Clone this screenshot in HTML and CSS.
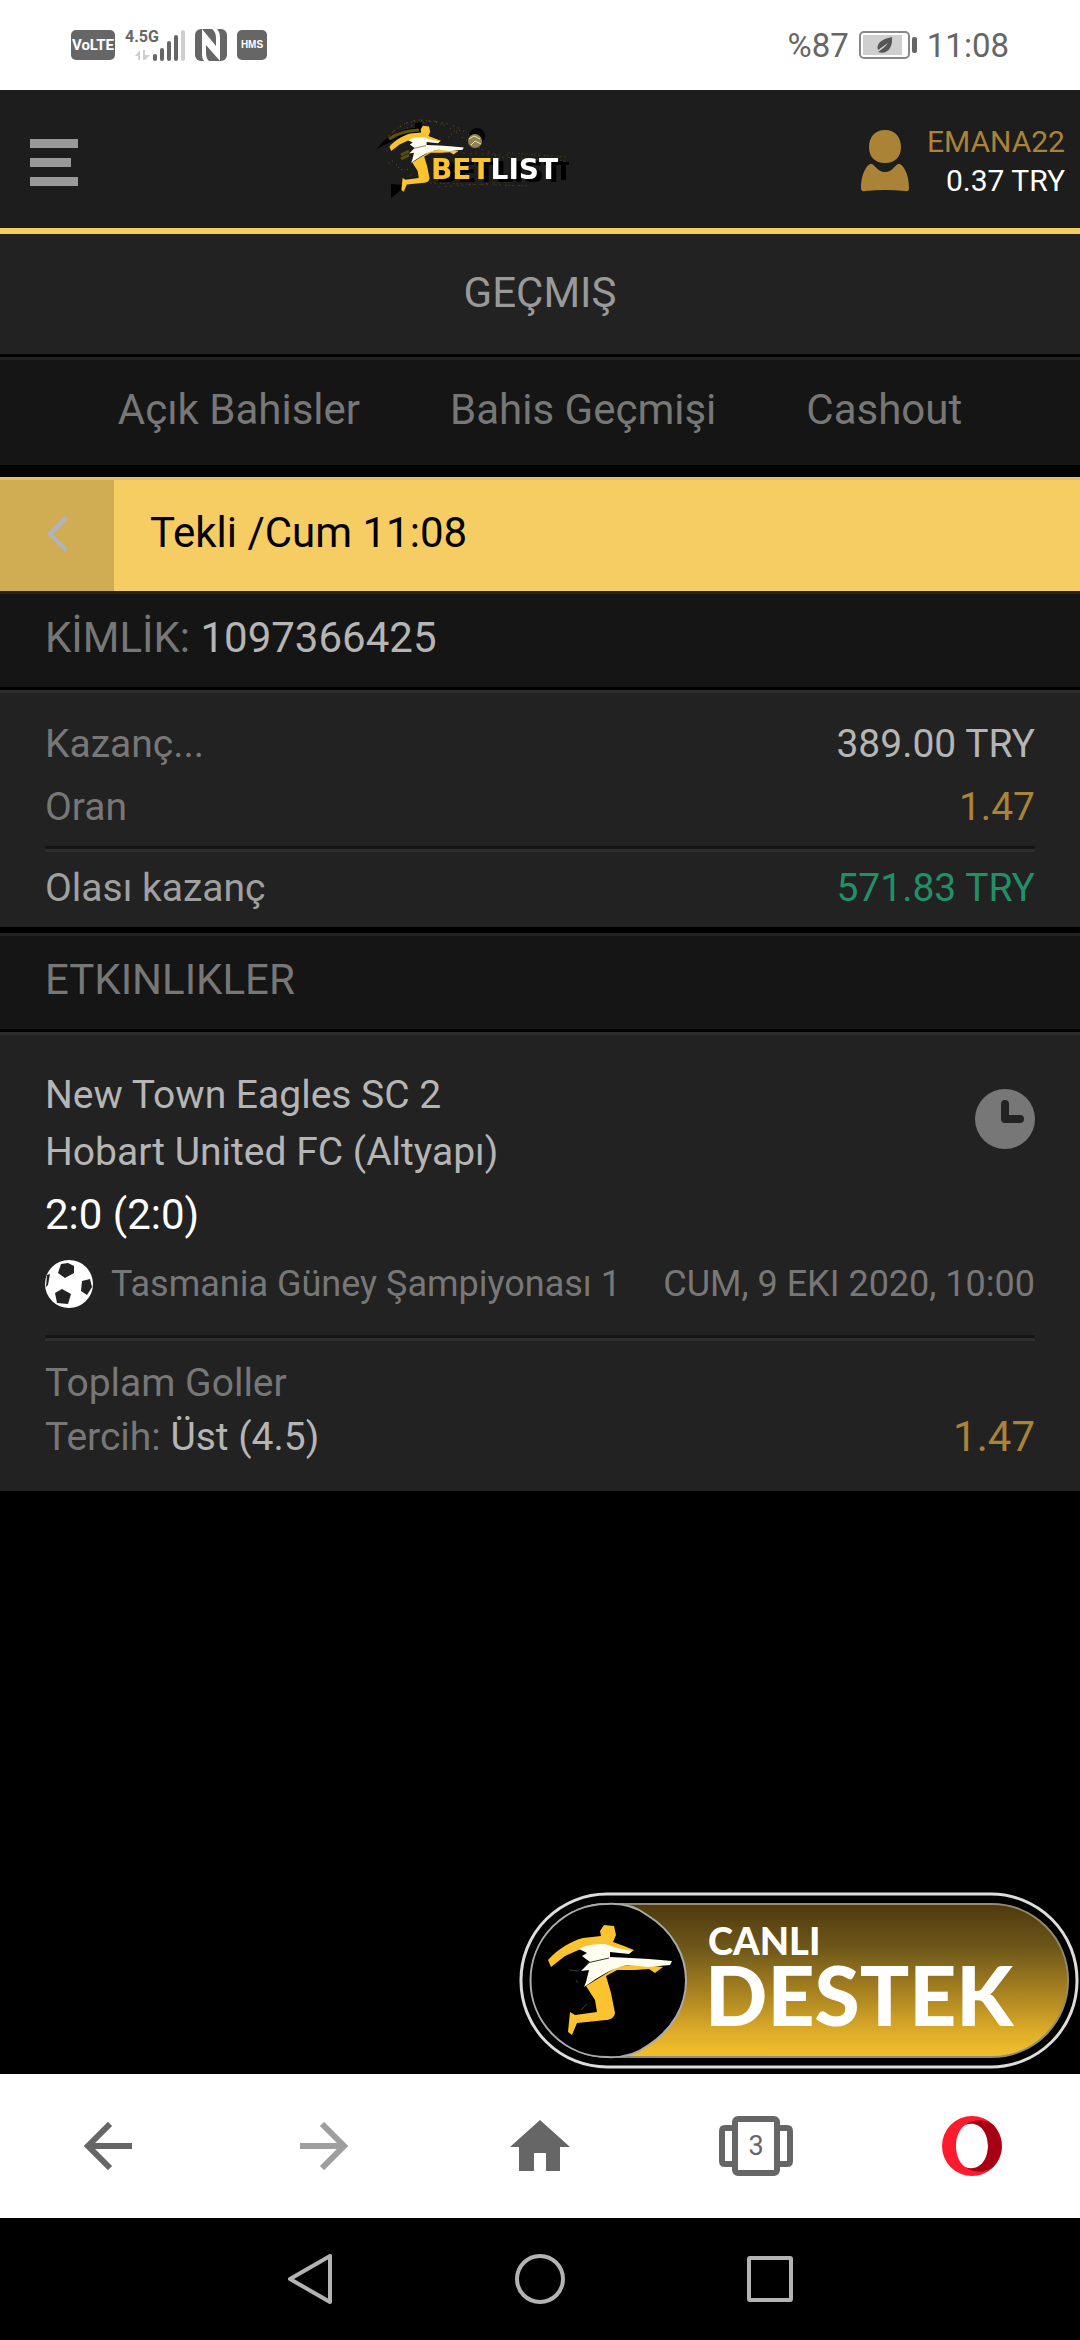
FILE: index.html
```html
<!DOCTYPE html>
<html lang="tr">
  <head>
    <meta charset="UTF-8" />
    <meta name="viewport" content="width=device-width, initial-scale=1.0" />
    <title>Betlist - Geçmiş</title>
    <link rel="stylesheet" href="styles.css">
  </head>
  <body>
    <!-- kicker figure, shared by the logo and the support button -->
    <svg class="defs" aria-hidden="true">
      <symbol id="kicker" viewBox="0 0 160 160" overflow="visible">
        <path fill="#fbc32f" d="M29 68C39 57 52 49 64 46L82 44 81 39 85 33 95 34 97 43 94 50 105 54 115 58 111 61 89 56 64 56 46 64 32 75Z"/>
        <path fill="#fbc32f" d="M98 75L118 72 144 75 136 81 130 77 116 78 98 78 87 84 92 101 96 121C95 126 91 128 87 128L58 131 53 143 49 140 51 120 56 123 78 120 76 108 67 94Z"/>
        <path fill="#fffdf0" d="M60 57C67 53 75 52 86 52L98 56 113 59 110 62 91 60 91 65 112 66 130 67 153 69 151 73 129 75 111 73C96 74 81 84 65 95L67 90 70 78 62 79 71 70 63 64 68 61Z"/>
        <path fill="none" stroke="#3a3a35" stroke-width="1" d="M68 71L90 66M50 78l10 1M57 88l2 3M62 118l6-6"/>
      </symbol>
    </svg>

    <div class="status">
      <div class="status-left">
        <span class="volte">VoLTE</span>
        <div class="signal">
          <span class="net">4.5G</span>
          <svg width="60" height="32" viewBox="0 0 60 32">
            <g fill="#cfcfcf">
              <path d="M10 27L15 21V31H13V27ZM18 21H20V26H25L20 31H18Z"/>
              <rect x="56" y="1" width="4" height="31" rx="2"/>
            </g>
            <g fill="#666">
              <rect x="28" y="25" width="4" height="7" rx="2"/>
              <rect x="35" y="19" width="4" height="13" rx="2"/>
              <rect x="42" y="12" width="4" height="20" rx="2"/>
              <rect x="49" y="6" width="4" height="26" rx="2"/>
            </g>
          </svg>
        </div>
        <svg width="32" height="32" viewBox="0 0 32 32">
          <rect width="32" height="32" rx="6" fill="#666"/>
          <path fill="#fff" d="M7 0L21 17V9Q21 3 17 0H22Q25 3 25 9V32L11 16V24Q11 29 14 32H9Q7 30 7 25Z"/>
        </svg>
        <span class="hms">HMS</span>
      </div>
      <div class="status-right">
        <span>%87</span>
        <svg width="58" height="28" viewBox="0 0 58 28">
          <rect x="1" y="1" width="49" height="26" rx="4" fill="#fff" stroke="#888" stroke-width="2"/>
          <rect x="4" y="4" width="39" height="20" fill="#cfcfcf"/>
          <rect x="53" y="6" width="5" height="16" rx="2" fill="#666"/>
          <path fill="#555" d="M33 6C22 8 17 13 19 19C23 16 26 14 29 12C26 16 23 18 19 21C28 24 34 17 33 6Z"/>
        </svg>
        <span>11:08</span>
      </div>
    </div>

    <header class="header">
      <button class="menu" type="button" aria-label="Menü">
        <svg width="48" height="48" viewBox="0 0 48 48" fill="#999">
          <path d="M0 0H48V9H0ZM0 19H41V28H0ZM0 38H48V47H0Z"/>
        </svg>
      </button>
      <a class="logo" href="#" aria-label="Betlist">
        <svg width="200" height="110" viewBox="10 0 200 110">
          <g fill="none" stroke="#a98420" stroke-linecap="round" opacity=".6">
            <path stroke-dasharray="0 5 0 3 0 7" d="M26 42C36 20 70 10 98 32S130 48 140 58M30 35C45 18 60 16 84 22"/>
            <path stroke-dasharray="0 4 0 6 0 3" d="M30 62C38 54 36 74 50 68M90 36C98 26 106 26 118 44M150 52L208 56M140 56L205 60M72 82L172 85"/>
            <path stroke-dasharray="0 7 0 5" d="M28 50C50 8 90 20 104 30M105 52L150 54M80 86L165 80"/>
          </g>
          <path fill="#000" d="M18 48C28 33 44 28 56 27L56 22 63 21 62 32C46 34 32 40 18 48ZM32 83L43 84 42 89 32 97Z"/>
          <path fill="none" stroke="#5c5208" stroke-width="3" d="M30 38C40 31 50 30 60 29M42 58l8-4M50 50l-8 4"/>
          <circle cx="118" cy="35" r="8" fill="#050505"/>
          <circle cx="116" cy="40" r="7" fill="#8f8251"/>
          <path fill="none" stroke="#eee5bd" d="M110 38l5-3 6 3M112 44l4-4 6 3"/>
          <use href="#kicker" x="13" y="5" width="96" height="96"/>
          <path fill="#000" d="M199 61H210V64H207V79H202V64H199Z"/>
          <text class="logo-text" x="72" y="78"><tspan fill="#fbc32f">BET</tspan><tspan fill="#fff">LIST</tspan></text>
        </svg>
      </a>
      <a class="user" href="#">
        <svg width="48" height="62" viewBox="0 0 48 62" fill="#ab8336">
          <path d="M24 0C34 0 40 7 40 17S34 33 24 33 8 27 8 17 14 0 24 0ZM10 34C14 34 16 42 24 42S34 34 38 34C42 34 48 44 48 58Q48 62 44 61Q24 59 4 61Q0 62 0 58C0 44 6 34 10 34Z"/>
        </svg>
        <span class="account">
          <span class="name">EMANA22</span>
          <span>0.37 TRY</span>
        </span>
      </a>
    </header>

    <main>
      <h1 class="title">GEÇMIŞ</h1>
      <nav class="tabs">
        <a href="#">Açık Bahisler</a>
        <a href="#">Bahis Geçmişi</a>
        <a href="#">Cashout</a>
      </nav>

      <div class="bet-bar">
        <button class="back" type="button" aria-label="Geri">
          <svg width="22" height="36" viewBox="0 0 22 36" fill="none" stroke="#b3b3b3" stroke-width="5" stroke-linecap="round" stroke-linejoin="round">
            <path d="M19 3L4 18L19 33"/>
          </svg>
        </button>
        <h2>Tekli /Cum 11:08</h2>
      </div>

      <div class="strip">KİMLİK: <span class="value">1097366425</span></div>

      <dl class="panel summary">
        <div class="row"><dt>Kazanç...</dt><dd>389.00 TRY</dd></div>
        <div class="row"><dt>Oran</dt><dd class="odds">1.47</dd></div>
        <div class="row total"><dt>Olası kazanç</dt><dd class="win">571.83 TRY</dd></div>
      </dl>

      <h2 class="strip events">ETKINLIKLER</h2>

      <section class="panel event">
        <div class="match">
          <div class="teams">
            <p>New Town Eagles SC 2</p>
            <p>Hobart United FC (Altyapı)</p>
            <p class="score">2:0 (2:0)</p>
          </div>
          <svg class="clock" width="60" height="60" viewBox="0 0 60 60">
            <circle cx="30" cy="30" r="30" fill="#777"/>
            <path fill="none" stroke="#222" stroke-width="8" stroke-linecap="round" stroke-linejoin="round" d="M30 15V30H45"/>
          </svg>
        </div>
        <div class="league">
          <svg width="48" height="48" viewBox="0 0 48 48">
            <circle cx="24" cy="24" r="24" fill="#fff"/>
            <path fill="#222" d="M16 4L23 3 29 6 29 13 20 18 13 13ZM37 21L45 19 47 27 42 35 36 31ZM10 33L17 29 26 34 23 44 12 43ZM2 15L5 14 3 25 1 27Z"/>
          </svg>
          <span class="league-name">Tasmania Güney Şampiyonası 1</span>
          <time datetime="2020-10-09T10:00">CUM, 9 EKI 2020, 10:00</time>
        </div>
        <div class="pick">
          <div>
            <p>Toplam Goller</p>
            <p>Tercih: <span class="value">Üst (4.5)</span></p>
          </div>
          <span class="odds big">1.47</span>
        </div>
      </section>
    </main>

    <button class="support" type="button" aria-label="Canlı Destek">
      <svg width="560" height="177" viewBox="0 0 560 177">
        <defs>
          <linearGradient id="gold" x1="0" y1="0" x2="0" y2="1">
            <stop offset="0" stop-color="#4f390d"/>
            <stop offset=".3" stop-color="#70591a"/>
            <stop offset=".6" stop-color="#ad8621"/>
            <stop offset=".85" stop-color="#e0ae29"/>
            <stop offset="1" stop-color="#f2c02d"/>
          </linearGradient>
        </defs>
        <rect x="2" y="2" width="556" height="173" rx="86" fill="#000" stroke="#ddd" stroke-width="3"/>
        <rect x="12" y="12" width="537" height="153" rx="76" fill="url(#gold)" stroke="#948a70" stroke-width="2"/>
        <path fill="#000" stroke="#aaa" stroke-width="2" d="M88 12A76 76 0 0 0 88 165C104 166 116 163 128 154C180 122 180 55 128 23C116 14 104 11 88 12Z"/>
        <use href="#kicker" width="160" height="160"/>
        <text class="canli" x="189" y="63">CANLI</text>
        <text class="destek" x="186" y="134">DESTEK</text>
      </svg>
    </button>

    <nav class="browser-bar">
      <button type="button" aria-label="Geri">
        <svg width="48" height="48" viewBox="0 0 48 48" fill="none" stroke="#666" stroke-width="6">
          <path d="M48 24H5M26 2L4 24L26 46"/>
        </svg>
      </button>
      <button type="button" aria-label="İleri">
        <svg width="48" height="48" viewBox="0 0 48 48" fill="none" stroke="#9e9e9e" stroke-width="6">
          <path d="M0 24H43M22 2L44 24L22 46"/>
        </svg>
      </button>
      <button type="button" aria-label="Ana sayfa">
        <svg width="60" height="54" viewBox="0 0 60 54" fill="#666">
          <path d="M30 1L60 28H50V52H36V34H24V52H9V28H0Z"/>
        </svg>
      </button>
      <button class="tab-count" type="button" aria-label="Sekmeler">
        <svg width="74" height="60" viewBox="0 0 74 60" fill="none" stroke="#666" stroke-width="6">
          <path d="M14 12H6Q3 12 3 15V45Q3 48 6 48H14M60 12H68Q71 12 71 15V45Q71 48 68 48H60"/>
          <rect x="16" y="3" width="42" height="54" rx="3"/>
        </svg>
        <span>3</span>
      </button>
      <button type="button" aria-label="Opera">
        <svg width="60" height="60" viewBox="0 0 60 60">
          <path fill="#ff1b2d" fill-rule="evenodd" d="M30 0A30 30 0 1 0 30 60A30 30 0 1 0 30 0ZM30 7C39 7 46 17 46 30S39 53 30 53 14 43 14 30 21 7 30 7Z"/>
          <path fill="#a70014" d="M23 9C33 2 44 4 50 8C63 20 63 40 50 52C42 57 31 57 23 51C36 56 46 45 46 30S36 4 23 9Z"/>
        </svg>
      </button>
    </nav>

    <nav class="system-bar">
      <button type="button" aria-label="Geri">
        <svg width="50" height="50" viewBox="0 0 50 50"><path d="M45 2V48L5 25Z"/></svg>
      </button>
      <button type="button" aria-label="Ana ekran">
        <svg width="50" height="50" viewBox="0 0 50 50"><circle cx="25" cy="25" r="23"/></svg>
      </button>
      <button type="button" aria-label="Son uygulamalar">
        <svg width="50" height="50" viewBox="0 0 50 50"><rect x="4" y="4" width="42" height="42" rx="1"/></svg>
      </button>
    </nav>
  </body>
</html>
```
FILE: styles.css
```css
* {
  box-sizing: border-box;
}

body {
  display: flex;
  flex-direction: column;
  min-height: 100vh;
  margin: 0;
  background-color: #000;
  color: #777;
  font-family: Roboto, "Liberation Sans", sans-serif;
  font-size: 39px;
}

h1, h2, p, dl, dd {
  margin: 0;
  font-size: inherit;
  font-weight: normal;
}

a {
  color: inherit;
  text-decoration: none;
}

button {
  padding: 0;
  border: none;
  background: none;
  color: inherit;
  font-family: inherit;
  cursor: pointer;
}

svg {
  display: block;
  flex-shrink: 0;
}

.defs {
  position: absolute;
  width: 0;
  height: 0;
}

/* phone status bar */
.status {
  display: flex;
  justify-content: space-between;
  align-items: center;
  height: 90px;
  padding: 0 71px;
  background-color: #fff;
  color: #666;
  font-size: 33px;
}

.status-left,
.status-right {
  display: flex;
  align-items: center;
  gap: 10px;
}

.volte,
.hms {
  height: 30px;
  border-radius: 5px;
  background-color: #666;
  color: #fff;
  font-family: "Liberation Sans Narrow", Roboto, sans-serif;
  font-size: 15px;
  font-weight: bold;
  line-height: 30px;
  text-align: center;
}

.volte {
  width: 44px;
}

.hms {
  width: 30px;
  font-family: "Liberation Sans", sans-serif;
  font-size: 10px;
}

.signal {
  position: relative;
}

.net {
  position: absolute;
  top: 0;
  left: 0;
  font-family: "Liberation Sans Narrow", Roboto, sans-serif;
  font-size: 16px;
  font-weight: bold;
  line-height: 16px;
}

/* site header */
.header {
  display: flex;
  justify-content: space-between;
  align-items: center;
  height: 144px;
  padding: 0 15px 0 30px;
  border-bottom: 6px solid #f6cd62;
  background-color: #1d1d1d;
}

.menu {
  padding-top: 8px;
}

.logo {
  margin-bottom: 6px;
}

.logo-text {
  font-family: "DejaVu Sans", sans-serif;
  font-size: 28px;
  font-weight: bold;
  filter: drop-shadow(5px 3px 0 #000);
}

.user {
  display: flex;
  align-items: center;
  gap: 18px;
  padding-top: 4px;
  color: #fff;
  font-size: 30px;
  line-height: 39px;
  text-align: right;
}

.account span {
  display: block;
}

.account .name {
  color: #ab8336;
}

/* page title and tabs */
.title {
  height: 123px;
  border-bottom: 3px solid #000;
  background-color: #222;
  color: #999;
  font-size: 42px;
  line-height: 118px;
  text-align: center;
}

.tabs {
  display: flex;
  justify-content: center;
  gap: 90px;
  height: 108px;
  border-top: 3px solid #222;
  background-color: #151515;
  font-size: 42px;
  line-height: 99px;
}

.bet-bar {
  display: flex;
  height: 114px;
  margin-top: 12px;
  border-top: 3px solid #e2c06f;
  background-color: #f6cd62;
  color: #000;
  font-size: 42px;
  line-height: 105px;
}

.bet-bar h2 {
  padding-left: 36px;
}

.back {
  display: flex;
  justify-content: center;
  align-items: center;
  width: 114px;
  padding-bottom: 3px;
  background-color: #d0ad53;
}

.strip {
  height: 99px;
  border-top: 3px solid #222;
  border-bottom: 3px solid #000;
  padding-left: 45px;
  background-color: #151515;
  font-size: 42px;
  line-height: 87px;
}

.value {
  color: #b5b5b5;
}

.panel {
  border-top: 3px solid #2d2d2d;
  background-color: #222;
}

/* stake, odds, possible win */
.summary {
  padding: 20px 45px 7px;
  line-height: 63px;
}

.row {
  display: flex;
  justify-content: space-between;
}

.row dd {
  color: #b5b5b5;
}

.total,
.pick {
  position: relative;
  border-top: 3px solid #151515;
}

.total::before,
.pick::before {
  content: "";
  position: absolute;
  top: 0;
  left: 0;
  right: 0;
  height: 3px;
  background-color: #2d2d2d;
}

.total {
  margin-top: 7px;
  padding-top: 8px;
}

.total dt {
  color: #a0a0a0;
}

.odds,
.row .odds {
  color: #ab8336;
}

.row .win {
  color: #209068;
}

.big {
  font-size: 42px;
}

.events {
  margin-top: 6px;
}

/* match card */
.event {
  padding: 32px 45px 27px;
}

.match {
  display: flex;
  justify-content: space-between;
  color: #b5b5b5;
  line-height: 57px;
}

.score {
  color: #fff;
  font-size: 42px;
  line-height: 67px;
}

.clock {
  margin-top: 22px;
}

.league {
  display: flex;
  align-items: center;
  margin: 12px 0 27px;
  font-size: 36px;
  line-height: 48px;
}

.league-name {
  flex: 1;
  padding-left: 18px;
}

.pick {
  display: flex;
  justify-content: space-between;
  align-items: flex-end;
  padding-top: 18px;
  line-height: 54px;
}

/* live support */
.support {
  align-self: flex-end;
  margin: auto 1px 5px 0;
}

.support text {
  fill: #fff;
  font-family: Lato, sans-serif;
  font-weight: 900;
}

.canli {
  font-size: 38px;
}

.destek {
  font-size: 82px;
}

/* browser toolbar */
.browser-bar {
  display: grid;
  grid-template-columns: repeat(5, 1fr);
  height: 144px;
  background-color: #fff;
}

.browser-bar button,
.system-bar button {
  display: flex;
  justify-content: center;
  align-items: center;
}

.tab-count {
  position: relative;
}

.tab-count span {
  position: absolute;
  color: #666;
  font-size: 27px;
}

/* android buttons */
.system-bar {
  display: flex;
  justify-content: center;
  gap: 180px;
  height: 122px;
}

.system-bar svg {
  fill: none;
  stroke: #b3b3b3;
  stroke-width: 4;
  stroke-linejoin: round;
}
```
